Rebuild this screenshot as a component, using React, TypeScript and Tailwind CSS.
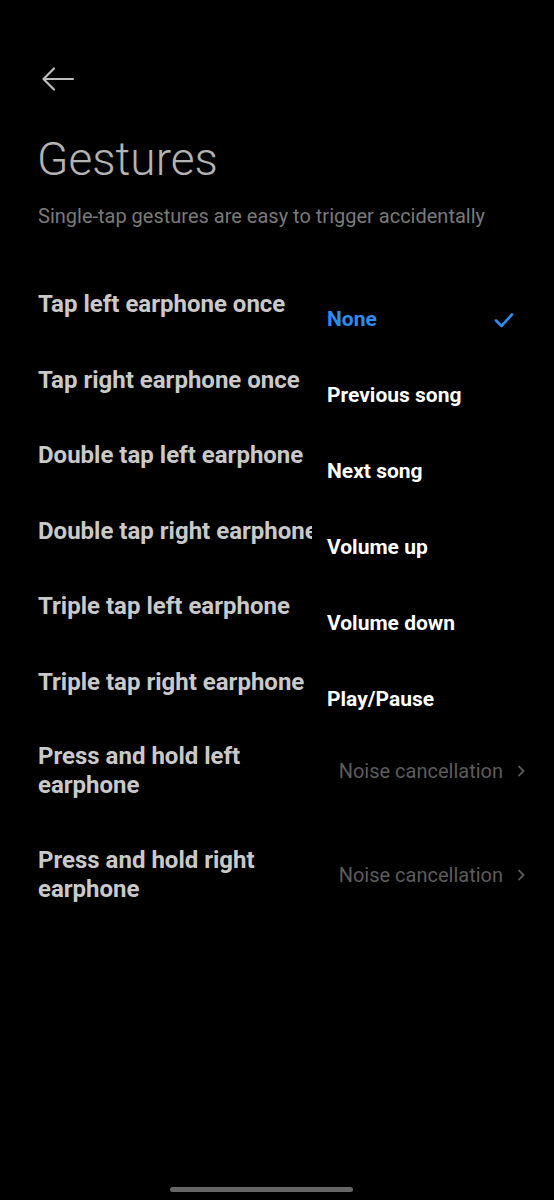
import React from "react";

const rows = [
  "Tap left earphone once",
  "Tap right earphone once",
  "Double tap left earphone",
  "Double tap right earphone",
  "Triple tap left earphone",
  "Triple tap right earphone",
];

const menu = ["None", "Previous song", "Next song", "Volume up", "Volume down", "Play/Pause"];

function Chevron() {
  return (
    <svg width="10" height="14" viewBox="0 0 10 14" fill="none">
      <path d="M3 2.5 L7.5 7 L3 11.5" stroke="#585858" strokeWidth="1.8" strokeLinecap="round" strokeLinejoin="round" />
    </svg>
  );
}

export default function App() {
  return (
    <div
      className="relative w-full h-[1200px] bg-black overflow-hidden"
      style={{ fontFamily: "Roboto, 'Noto Sans', sans-serif" }}
    >
      <div className="pt-[66px] pl-[41px] flex">
        <svg width="34" height="26" viewBox="0 0 34 26" fill="none">
          <path d="M32 13 H3 M13 2.5 L2.5 13 L13 23.5" stroke="#bdbdbd" strokeWidth="2.2" strokeLinecap="round" strokeLinejoin="round" />
        </svg>
      </div>
      <div className="pl-[37px] mt-[39px] text-[46px] leading-[56px] font-light text-[#b3b3b3]">Gestures</div>
      <div className="pl-[38px] mt-[17px] text-[20px] leading-[24px] text-[#7a7a7a] whitespace-nowrap">
        Single-tap gestures are easy to trigger accidentally
      </div>

      <div className="mt-[39px] flex flex-col">
        {rows.map((r) => (
          <div key={r} className="h-[75.5px] flex items-center pl-[38px]">
            <span className="text-[24px] leading-[29px] font-bold text-[#c9c9c9] whitespace-nowrap">{r}</span>
          </div>
        ))}
        <div className="h-[102px] flex items-center pl-[38px] pr-[28px] justify-between">
          <span className="text-[24px] leading-[29px] font-bold text-[#c9c9c9]">
            Press and hold left
            <br />
            earphone
          </span>
          <span className="flex items-center gap-[13px] text-[20px] text-[#5c5c5c]">
            Noise cancellation
            <Chevron />
          </span>
        </div>
        <div className="h-[106px] flex items-center pl-[38px] pr-[28px] justify-between">
          <span className="text-[24px] leading-[29px] font-bold text-[#c9c9c9]">
            Press and hold right
            <br />
            earphone
          </span>
          <span className="flex items-center gap-[13px] text-[20px] text-[#5c5c5c]">
            Noise cancellation
            <Chevron />
          </span>
        </div>
      </div>

      <div className="absolute left-[312px] top-[282px] w-[242px] bg-black flex flex-col">
        {menu.map((m, i) => (
          <div key={m} className="h-[76px] flex items-center justify-between pl-[15px] pr-[40px]">
            <span className={"text-[21px] font-bold " + (i === 0 ? "text-[#2d8cf0]" : "text-white")}>{m}</span>
            {i === 0 && (
              <svg width="20" height="16" viewBox="0 0 20 16" fill="none">
                <path d="M2 8.5 L7.5 14 L18 2.5" stroke="#2d8cf0" strokeWidth="2.6" strokeLinecap="round" strokeLinejoin="round" />
              </svg>
            )}
          </div>
        ))}
      </div>

      <div className="absolute left-[170px] bottom-[8px] w-[183px] h-[5px] rounded-full bg-[#666]" />
    </div>
  );
}
